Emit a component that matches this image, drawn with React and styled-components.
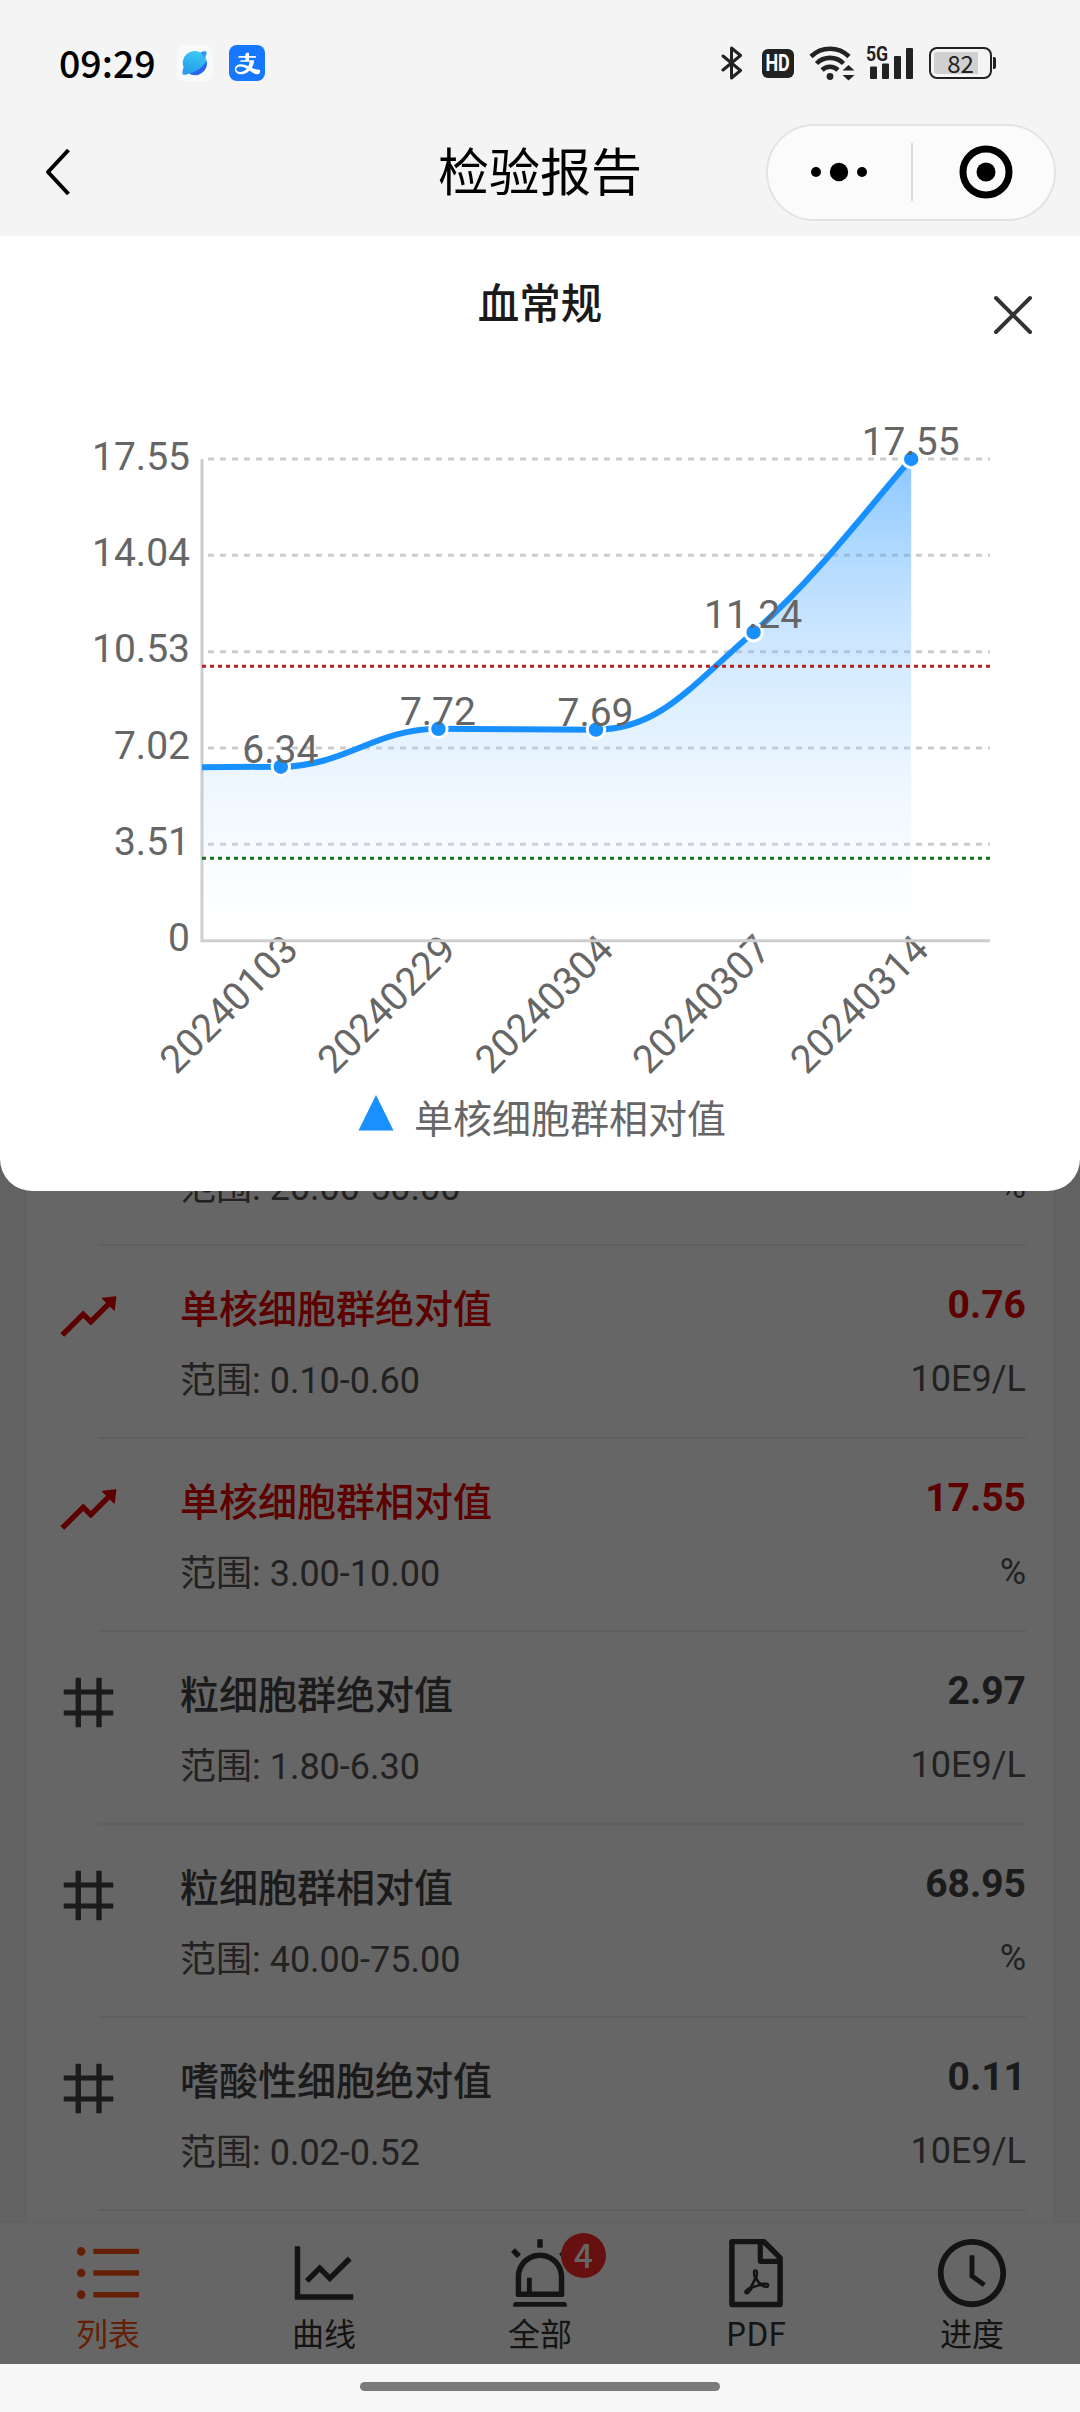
import React from "react";
import styled, { createGlobalStyle } from "styled-components";
import {
    AiOutlineRise,
    AiOutlineNumber,
    AiOutlineUnorderedList,
    AiOutlineLineChart,
    AiOutlineAlert,
    AiOutlineFilePdf,
    AiOutlineClockCircle,
    AiOutlineAlipay,
} from "react-icons/ai";

const sans = `Roboto, "Noto Sans CJK SC", sans-serif`;
const systemFont = `"Noto Sans CJK SC", "Noto Sans", sans-serif`;

const results = [
    { name: "淋巴细胞群相对值", range: "20.00-50.00", value: "20.10", unit: "%" },
    { name: "单核细胞群绝对值", range: "0.10-0.60", value: "0.76", unit: "10E9/L", high: true },
    { name: "单核细胞群相对值", range: "3.00-10.00", value: "17.55", unit: "%", high: true },
    { name: "粒细胞群绝对值", range: "1.80-6.30", value: "2.97", unit: "10E9/L" },
    { name: "粒细胞群相对值", range: "40.00-75.00", value: "68.95", unit: "%" },
    { name: "嗜酸性细胞绝对值", range: "0.02-0.52", value: "0.11", unit: "10E9/L" },
];

const tabs = [
    { label: "列表", Icon: AiOutlineUnorderedList, active: true },
    { label: "曲线", Icon: AiOutlineLineChart },
    { label: "全部", Icon: AiOutlineAlert, badge: 4 },
    { label: "PDF", Icon: AiOutlineFilePdf },
    { label: "进度", Icon: AiOutlineClockCircle },
];

const history = [
    { date: "20240103", value: 6.34 },
    { date: "20240229", value: 7.72 },
    { date: "20240304", value: 7.69 },
    { date: "20240307", value: 11.24 },
    { date: "20240314", value: 17.55 },
];

// plot box inside the chart svg
const plot = { left: 202, right: 990, top: 89, bottom: 570.7 };
const ticks = ["17.55", "14.04", "10.53", "7.02", "3.51", "0"];
const maxValue = 17.55;
const step = (plot.right - plot.left) / history.length;

const toY = (v) => plot.bottom - (v / maxValue) * (plot.bottom - plot.top);
const points = history.map((h, i) => ({
    ...h,
    x: plot.left + step * (i + 0.5),
    y: toY(h.value),
}));

// peaks and valleys keep a flat tangent
const isTurning = (i) => {
    const prev = points[i - 1];
    const next = points[i + 1];
    if (!prev || !next) return i === 0;
    const y = points[i].y;
    return y >= Math.max(prev.y, next.y) || y <= Math.min(prev.y, next.y);
};

const buildLine = () => {
    const k = 0.2;
    let d = `M${plot.left} ${points[0].y + 0.6} L${points[0].x} ${points[0].y}`;
    for (let i = 0; i < points.length - 1; i++) {
        const p = points[i];
        const q = points[i + 1];
        const before = points[i - 1];
        const after = points[i + 2];
        const ax = p.x + step * 2 * k;
        const bx = after ? q.x - step * 2 * k : q.x - step * k;
        const ay = isTurning(i) ? p.y : p.y + (q.y - before.y) * k;
        const by = isTurning(i + 1) ? q.y : after ? q.y - (after.y - p.y) * k : q.y - (q.y - p.y) * k;
        d += ` C${ax} ${ay} ${bx} ${by} ${q.x} ${q.y}`;
    }
    return d;
};

const TrendChart = () => {
    const line = buildLine();
    const last = points[points.length - 1];
    const area = `${line} L${last.x} ${plot.bottom} L${plot.left} ${plot.bottom} Z`;
    return (
        <ChartSvg viewBox="0 0 1080 710">
            <defs>
                <linearGradient id="areaFill" gradientUnits="userSpaceOnUse" x1="0" y1={plot.top} x2="0" y2={plot.bottom}>
                    <stop offset="0" stopColor="#1890ff" stopOpacity="0.5" />
                    <stop offset="1" stopColor="#ffffff" stopOpacity="0.1" />
                </linearGradient>
            </defs>
            {ticks.map((t) => (
                <g key={t}>
                    {t !== "0" && <GridLine x1={plot.left + 6} x2={plot.right} y1={toY(Number(t))} y2={toY(Number(t))} />}
                    <ChartText x="190" y={toY(Number(t)) + 10.5} textAnchor="end">{t}</ChartText>
                </g>
            ))}
            {points.map((p) => (
                <ChartText
                    key={p.date}
                    textAnchor="end"
                    transform={`translate(${p.x + 19.500} ${plot.bottom + 11}) rotate(-45)`}
                >
                    {p.date}
                </ChartText>
            ))}
            <path d={`M${plot.left} ${plot.top}V${plot.bottom}H${plot.right}`} fill="none" stroke="#ccc" strokeWidth="3" />
            <path d={area} fill="url(#areaFill)" />
            <path d={line} fill="none" stroke="#1890ff" strokeWidth="6" />
            {points.map((p) => (
                <circle key={p.date} cx={p.x} cy={p.y} r="8.7" fill="#1890ff" stroke="#fff" strokeWidth="3" />
            ))}
            <LimitLine x1={plot.left} x2={plot.right} y1={toY(10)} y2={toY(10)} stroke="#b22222" />
            <LimitLine x1={plot.left} x2={plot.right} y1={toY(3)} y2={toY(3)} stroke="#1a701a" />
            {points.map((p) => (
                <ChartText key={p.date} x={p.x - 0.5} y={p.y - 4} textAnchor="middle">{p.value}</ChartText>
            ))}
        </ChartSvg>
    );
};

const StatusIcons = () => (
    <StatusRight>
        <svg width="22" height="36" viewBox="0 0 22 36" fill="none" stroke="#222" strokeWidth="3" strokeLinejoin="round" strokeLinecap="round">
            <path d="M2 11L19.5 25.5 10.5 33V3L19.5 10.5 2 25" />
        </svg>
        <HdMark><span>HD</span></HdMark>
        <svg width="46" height="36" viewBox="0 0 46 36">
            <g fill="none" stroke="#222" strokeWidth="4.6">
                <path d="M2 11.5A27 27 0 0 1 40 11.5" />
                <path d="M7.5 18.5A19 19 0 0 1 34.5 18.5" />
                <path d="M13 25A11.5 11.5 0 0 1 29 25" />
            </g>
            <circle cx="21" cy="31.5" r="3.4" fill="#222" />
            <path d="M33.5 25.5L39.500 20l6 5.500zM33.500 30L39.500 35.500l6-5.500z" fill="#222" />
        </svg>
        <Signal>
            <NetLabel>5G</NetLabel>
            <svg width="44" height="31" viewBox="0 0 44 31" fill="#222">
                <rect x="0" y="18.500" width="7" height="12.500" rx="1" />
                <rect x="12" y="15.500" width="7" height="15.500" rx="1" />
                <rect x="24" y="8" width="7" height="23" rx="1" />
                <rect x="36" y="0" width="7" height="31" rx="1" />
            </svg>
        </Signal>
        <Battery>
            <BatteryBody>82</BatteryBody>
            <BatteryTip />
        </Battery>
    </StatusRight>
);

const BrowserIcon = () => (
    <svg width="36" height="36" viewBox="0 0 36 36">
        <defs>
            <linearGradient id="planet" x1="0.6" y1="0" x2="0.3" y2="1">
                <stop offset="0" stopColor="#3fc8f4" />
                <stop offset="1" stopColor="#1f9bea" />
            </linearGradient>
        </defs>
        <rect width="36" height="36" rx="8" fill="#f8f9fa" />
        <circle cx="17.8" cy="18" r="12" fill="url(#planet)" />
        <path d="M29.6 15.5A12 12 0 0 1 12.5 28.8C20 26.5 26.5 21.5 29.6 15.5z" fill="#2b62ee" />
        <path d="M23.5 7.5C26 6 29 5.600 29.500 7c.4 1.600-.6 4.200-2 6.200zM6.700 22.500C5.400 25 5 28.500 6 29.500c1.400.8 4 .2 6-1.200z" fill="#2a9df0" />
    </svg>
);

const App = () => {
    return (
        <Screen>
            <GlobalStyle />
            <StatusBar>
                <Clock>09:29</Clock>
                <BrowserIcon />
                <PayIcon><AiOutlineAlipay size={29} /></PayIcon>
                <StatusIcons />
            </StatusBar>
            <NavBar>
                <BackButton>
                    <svg width="26" height="48" viewBox="0 0 26 48" fill="none" stroke="#000" strokeWidth="4" strokeLinejoin="round">
                        <path d="M23.500 2L3 24l20.500 22" />
                    </svg>
                </BackButton>
                <NavTitle>检验报告</NavTitle>
                <Capsule>
                    <CapsuleHalf>
                        <svg width="58" height="20" viewBox="0 0 58 20">
                            <circle cx="6" cy="10" r="5" />
                            <circle cx="29" cy="10" r="9.2" />
                            <circle cx="52" cy="10" r="5" />
                        </svg>
                    </CapsuleHalf>
                    <CapsuleLine />
                    <CapsuleHalf>
                        <svg width="54" height="54" viewBox="0 0 54 54">
                            <circle cx="27" cy="27" r="23" fill="none" stroke="#000" strokeWidth="7" />
                            <circle cx="27" cy="27" r="9.5" />
                        </svg>
                    </CapsuleHalf>
                </Capsule>
            </NavBar>

            <Page>
                <ListArea>
                    <Card>
                        {results.map((r) => (
                            <Row key={r.name}>
                                <RowIcon $high={r.high}>
                                    {r.high ? <AiOutlineRise size={69} /> : <AiOutlineNumber size={69} />}
                                </RowIcon>
                                <RowBody>
                                    <RowName $high={r.high}>{r.name}</RowName>
                                    <RowRange>范围: {r.range}</RowRange>
                                </RowBody>
                                <RowResult>
                                    <RowValue $high={r.high}>{r.value}</RowValue>
                                    <RowUnit>{r.unit}</RowUnit>
                                </RowResult>
                            </Row>
                        ))}
                    </Card>
                </ListArea>
                <TabBar>
                    {tabs.map(({ label, Icon, active, badge }) => (
                        <Tab key={label} $active={active}>
                            <TabIcon>
                                <Icon size={78} />
                                {badge && <Badge>{badge}</Badge>}
                            </TabIcon>
                            <TabLabel>{label}</TabLabel>
                        </Tab>
                    ))}
                </TabBar>

                <Mask />
                <Popup>
                    <PopupTitle>血常规</PopupTitle>
                    <CloseButton>
                        <svg width="40" height="40" viewBox="0 0 40 40" stroke="#333" strokeWidth="4" strokeLinecap="round">
                            <path d="M3 3l34 34M37 3L3 37" />
                        </svg>
                    </CloseButton>
                    <TrendChart />
                    <Legend>
                        <svg width="36" height="36" viewBox="0 0 36 36"><path d="M18 0l17.500 35.500H.5z" fill="#1890ff" /></svg>
                        <span>单核细胞群相对值</span>
                    </Legend>
                </Popup>
            </Page>
            <GestureBar><Pill /></GestureBar>
        </Screen>
    );
};

const GlobalStyle = createGlobalStyle`
    * {
        box-sizing: border-box;
    }
    body {
        margin: 0;
        font-family: ${sans};
    }
    svg {
        display: block;
        flex-shrink: 0;
    }
`;

const Screen = styled.div`
    display: flex;
    flex-direction: column;
    width: 1080px;
    height: 2412px;
    overflow: hidden;
    background: #f4f4f4;
`;

const StatusBar = styled.div`
    display: flex;
    align-items: center;
    height: 104px;
    padding: 22px 84px 0 59px;
    font-family: ${systemFont};
`;

const Clock = styled.div`
    width: 118px;
    padding-bottom: 2px;
    font-size: 37.5px;
    font-weight: 500;
    line-height: 38px;
    color: #000;
`;

const PayIcon = styled.div`
    display: flex;
    align-items: center;
    justify-content: center;
    width: 36px;
    height: 36px;
    margin-left: 16px;
    border-radius: 8px;
    background: #1677ff;
    color: #fff;
`;

const StatusRight = styled.div`
    display: flex;
    align-items: center;
    margin-left: auto;
`;

const HdMark = styled.div`
    display: flex;
    align-items: center;
    justify-content: center;
    width: 32px;
    height: 29px;
    margin: 0 15px 0 19px;
    border-radius: 6px;
    background: #222;
    color: #fff;
    font: 700 23px/29px Roboto, sans-serif;

    span {
        transform: scaleX(0.78);
    }
`;

const Signal = styled.div`
    position: relative;
    width: 46px;
    height: 36px;
    margin: 0 16px 0 12px;
    padding: 3px 0 0 3px;
`;

const NetLabel = styled.div`
    position: absolute;
    left: -1px;
    top: -1px;
    color: #222;
    font: 700 21px/20px Roboto, sans-serif;
    transform: scaleX(0.84);
    transform-origin: left;
`;

const Battery = styled.div`
    display: flex;
    align-items: center;
`;

const BatteryBody = styled.div`
    width: 63px;
    height: 32px;
    padding: 3px;
    border: 2px solid #222;
    border-radius: 8px;
    background: linear-gradient(to right, #d0d0d0 44px, transparent 44px) content-box;
    color: #222;
    font-size: 24px;
    line-height: 22px;
    text-align: center;
`;

const BatteryTip = styled.div`
    width: 3px;
    height: 12px;
    margin-left: 1px;
    border-radius: 0 2px 2px 0;
    background: #222;
`;

const NavBar = styled.div`
    display: grid;
    grid-template-columns: 1fr auto 1fr;
    align-items: center;
    height: 132px;
    padding: 4px 24px 0;
`;

const BackButton = styled.div`
    display: flex;
    padding-left: 21px;
`;

const NavTitle = styled.div`
    padding-top: 4px;
    color: #000;
    font-size: 51px;
    line-height: 60px;
`;

const Capsule = styled.div`
    display: flex;
    align-items: center;
    justify-self: end;
    width: 290px;
    height: 97px;
    padding-left: 2px;
    border: 2px solid #e3e3e3;
    border-radius: 49px;
    background: #fbfbfb;
`;

const CapsuleHalf = styled.div`
    display: flex;
    flex: 1;
    justify-content: center;

    &:first-child {
        padding-right: 4px;
    }
    &:last-child {
        padding-left: 4px;
    }
`;

const CapsuleLine = styled.div`
    width: 2px;
    height: 58px;
    background: #dcdcdc;
`;

const Page = styled.div`
    position: relative;
    display: flex;
    flex-direction: column;
    height: 2128px;
    background: #f4f4f4;
`;

const ListArea = styled.div`
    display: flex;
    flex: 1;
    min-height: 0;
    padding: 0 27px;
`;

const Card = styled.div`
    display: flex;
    flex: 1;
    flex-direction: column;
    justify-content: flex-end;
    padding: 0 27px 11px 20px;
    background: #fff;
`;

const Row = styled.div`
    display: flex;
    height: 193px;
    padding-top: 36px;
    background: linear-gradient(#eee, #eee) 52px bottom / 927px 2px no-repeat;
`;

const RowIcon = styled.div`
    width: 133px;
    padding-left: 7px;
    color: ${({ $high }) => ($high ? "#e60000" : "#444")};
`;

const RowBody = styled.div`
    flex: 1;
`;

const RowName = styled.div`
    color: ${({ $high }) => ($high ? "#e60000" : "#444")};
    font-size: 39px;
    font-weight: 500;
    line-height: 57px;
`;

const RowRange = styled.div`
    margin-top: 15px;
    color: #555;
    font-size: 36px;
    line-height: 55px;
`;

const RowResult = styled.div`
    text-align: right;
`;

const RowValue = styled.div`
    height: 56px;
    color: ${({ $high }) => ($high ? "#e60000" : "#444")};
    font-size: 39px;
    font-weight: 700;
    line-height: 46px;
`;

const RowUnit = styled.div`
    margin-top: 16px;
    color: #555;
    font-size: 36px;
    line-height: 50px;
`;

const TabBar = styled.div`
    display: flex;
    height: 142px;
    border-top: 1px solid #eee;
    background: #fff;
`;

const Tab = styled.div`
    display: flex;
    flex: 1;
    flex-direction: column;
    align-items: center;
    padding-top: 11px;
    color: ${({ $active }) => ($active ? "#fa5010" : "#333")};
`;

const TabIcon = styled.div`
    position: relative;
`;

const TabLabel = styled.div`
    font-family: ${systemFont};
    font-size: 32px;
    line-height: 41px;
`;

const Badge = styled.div`
    position: absolute;
    left: 60px;
    top: -1px;
    width: 45px;
    height: 45px;
    border-radius: 50%;
    background: #ff2a2a;
    color: #fff;
    font: 500 33px/42px ${systemFont};
    text-align: center;
`;

const Mask = styled.div`
    position: absolute;
    inset: 0;
    background: rgba(0, 0, 0, 0.6);
`;

const Popup = styled.div`
    position: absolute;
    top: 0;
    left: 0;
    width: 1080px;
    height: 955px;
    border-radius: 0 0 32px 32px;
    background: #fff;
`;

const PopupTitle = styled.div`
    height: 134px;
    color: #1a1a1a;
    font-size: 41.5px;
    font-weight: 500;
    line-height: 138px;
    text-align: center;
`;

const CloseButton = styled.div`
    position: absolute;
    top: 59px;
    right: 47px;
`;

const ChartSvg = styled.svg`
    width: 1080px;
    height: 710px;
`;

const ChartText = styled.text`
    fill: #666;
    font-family: ${sans};
    font-size: 39px;
`;

const GridLine = styled.line`
    stroke: #ccc;
    stroke-width: 3;
    stroke-dasharray: 6 6;
`;

const LimitLine = styled.line`
    stroke-width: 3;
    stroke-dasharray: 4 4;
`;

const Legend = styled.div`
    display: flex;
    align-items: center;
    justify-content: center;
    gap: 20px;
    height: 72px;
    padding-left: 4px;
    color: #666;
    font-size: 39px;

    svg {
        margin-top: -6px;
    }
`;

const GestureBar = styled.div`
    display: flex;
    justify-content: center;
    height: 48px;
    padding-top: 18px;
    background: #f7f7f7;
`;

const Pill = styled.div`
    width: 360px;
    height: 9px;
    border-radius: 5px;
    background: #7b7b7b;
`;

export default App;
